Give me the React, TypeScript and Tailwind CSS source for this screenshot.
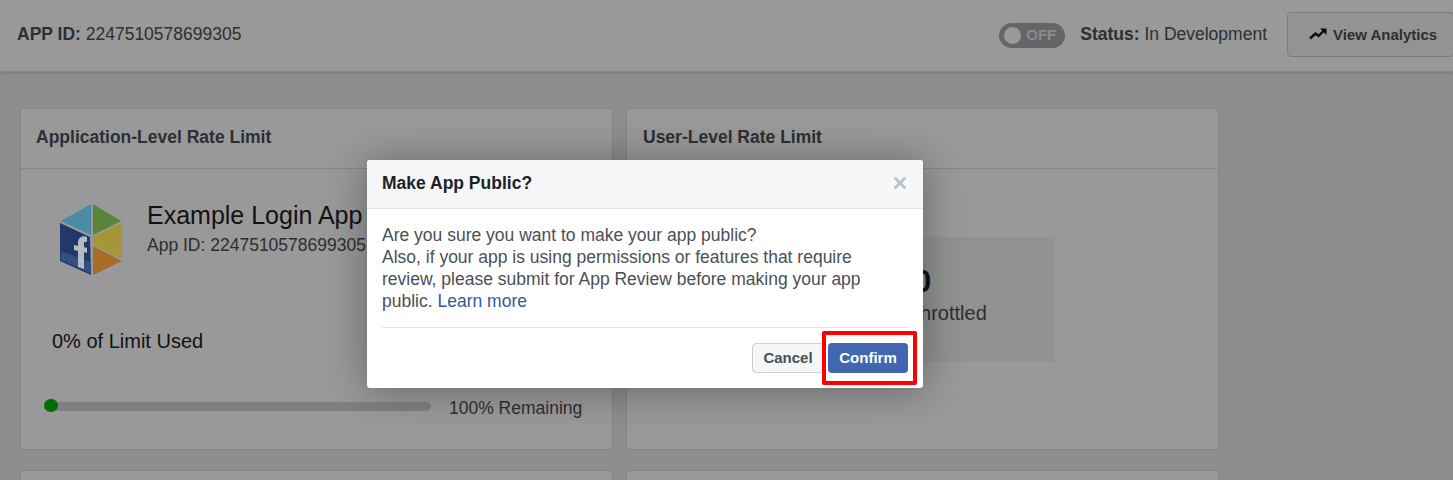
import { X } from "lucide-react";

// sits above the overlay, so the colours here are the dimmed ones
function AppCube() {
  return (
    <svg width="64" height="72" viewBox="0 0 64 72" className="relative z-10 shrink-0">
      <polygon points="31,0 1,17 31,31" fill="#4a8ca8" />
      <polygon points="33,0 61,17 33,31" fill="#5a8438" />
      <polygon points="0,19 30,33 31,71 0,57" fill="#20396a" />
      <polygon points="33,33 62,18 62,55 33,41" fill="#a5963a" />
      <polygon points="33,42 62,57 33,71" fill="#a86c28" />
      <polygon points="1,47 30,58 30,69 1,56" fill="#34507f" />
      <path d="M18 63 L18 47 L14 46 L14 41 L18 42 L18 39 C18 33 23 31 27 33 L27 38 C24 37 24 38 24 41 L24 43 L27 44 L27 49 L24 48 L24 65 Z" fill="#b8bcc2" />
    </svg>
  );
}

function CardHeader({ title, left }: { title: string; left: string }) {
  return (
    <div className={`h-[60px] border-b border-[#dddfe2] ${left} pb-[2px] flex items-center`}>
      <h2 className="text-[17.5px] font-bold text-[#4b4f56]">{title}</h2>
    </div>
  );
}

export default function App() {
  return (
    <div className="relative h-[480px] overflow-hidden bg-[#e9ebee] font-['Liberation_Sans',Arial,sans-serif] text-[#1d2129]">
      {/* Top bar */}
      <div className="h-[72px] bg-white border-b border-[#dddfe2] shadow-sm flex items-start pl-[17px]">
        <p className="mt-[23px] text-[17.5px] text-[#4b4f56] leading-[22px]">
          <strong>APP ID:</strong> 2247510578699305
        </p>
        <div className="ml-auto flex items-start -mr-px">
          <div className="mt-[23px] w-[66px] h-[25px] rounded-full bg-[#a6a9ae] flex items-center pl-[5px] gap-[5px]">
            <span className="size-[17px] rounded-full bg-white" />
            <span className="text-[15px] font-bold text-[#e6e8eb]">OFF</span>
          </div>
          <p className="mt-[23px] ml-[15px] text-[17.5px] leading-[22px] text-[#4b4f56]">
            <strong>Status:</strong> In Development
          </p>
          <button className="mt-3 ml-5 w-[167px] h-[45px] pt-[2px] bg-[#f5f6f7] border border-[#ccd0d5] rounded-sm flex items-center pl-[21px] gap-[6px] text-[15px] font-bold text-[#4b4f56] whitespace-nowrap">
            <svg width="18" height="12" viewBox="0 0 18 12" className="shrink-0 -mt-[3px]">
              <path d="M1 10.5 L6.5 5.5 L9.5 8 L15 2.5" fill="none" stroke="#111" strokeWidth="2.4" />
              <polygon points="11,0.5 17.5,0.5 17.5,7" fill="#111" />
            </svg>
            View Analytics
          </button>
        </div>
      </div>

      {/* Cards */}
      <div className="pt-[36px] pl-5 grid grid-cols-[593px_593px] gap-x-[13px] gap-y-[20px]">
        <section className="h-[342px] bg-white border border-[#dddfe2] rounded-[3px]">
          <CardHeader title="Application-Level Rate Limit" left="pl-[15px]" />
          <div className="flex items-start gap-[23px] pl-[39px] pt-[32px]">
            <div className="pt-[3px]">
              <AppCube />
            </div>
            <div>
              <p className="text-[25px] leading-7 text-[#1d2129]">Example Login App</p>
              <p className="text-[17.5px] leading-[22px] text-[#4b4f56] mt-[5px]">App ID: 2247510578699305</p>
            </div>
          </div>
          <p className="mt-[53px] ml-[31px] text-xl leading-6 text-[#1d2129]">0% of Limit Used</p>
          <div className="mt-[44px] ml-[23px] flex items-start">
            <div className="relative mt-[5px] w-[387px] h-[9px] rounded-full bg-[#d5d6d9]">
              <span className="absolute left-0 -top-[3px] w-[14px] h-[13px] rounded-full bg-[#00b800]" />
            </div>
            <span className="ml-[18px] text-[17.5px] leading-[22px] text-[#4b4f56]">100% Remaining</span>
          </div>
        </section>

        <section className="h-[342px] bg-white border border-[#dddfe2] rounded-[3px]">
          <CardHeader title="User-Level Rate Limit" left="pl-[16px]" />
          <div className="mt-[68px] ml-[90px] w-[338px] h-[125px] bg-[#f0f5f0] flex flex-col items-center pt-[26px] pl-[73px]">
            <p className="text-[32px] leading-9 font-bold text-[#1d2129]">0</p>
            <p className="mt-[2px] text-xl leading-6 text-[#4b4f56]">Calls Throttled</p>
          </div>
        </section>

        <section className="h-[60px] bg-white border border-[#dddfe2] rounded-[3px]" />
        <section className="h-[60px] bg-white border border-[#dddfe2] rounded-[3px]" />
      </div>

      {/* Overlay */}
      <div className="absolute inset-0 bg-black/40" />

      {/* Modal */}
      <div className="absolute z-20 left-[367px] top-[160px] w-[556px] h-[228px] bg-white rounded-[3px] shadow-[0_2px_40px_rgba(0,0,0,0.35)]">
        <div className="h-[49px] pb-[2px] bg-[#f5f6f7] border-b border-[#e5e5e5] rounded-t-[3px] flex items-center justify-between pl-[15px] pr-[14px]">
          <h3 className="text-[17.5px] font-bold text-[#1d2129]">Make App Public?</h3>
          <X size={18} strokeWidth={4} className="text-[#bec2c9]" />
        </div>
        <div className="px-[15px] pt-[15px]">
          <p className="text-[17.5px] leading-[22px] text-[#4b4f56] h-[104px] border-b border-[#e5e5e5]">
            Are you sure you want to make your app public?
            <br />
            Also, if your app is using permissions or features that require
            <br />
            review, please submit for App Review before making your app
            <br />
            public. <a className="text-[#365899]">Learn more</a>
          </p>
        </div>
        <div className="relative flex justify-end gap-[4px] pr-[15px] pt-[15px]">
          <button className="w-[72px] h-[30px] bg-[#f5f6f7] border border-[#ccd0d5] rounded-sm text-[15px] font-bold text-[#4b4f56]">
            Cancel
          </button>
          <button className="w-[80px] h-[30px] bg-[#4267b2] rounded-sm text-[15px] font-bold text-white">Confirm</button>
          <span className="absolute left-[455px] top-[3px] w-[95px] h-[54px] border-[4px] border-[#ff0000] rounded-[2px]" />
        </div>
      </div>
    </div>
  );
}
